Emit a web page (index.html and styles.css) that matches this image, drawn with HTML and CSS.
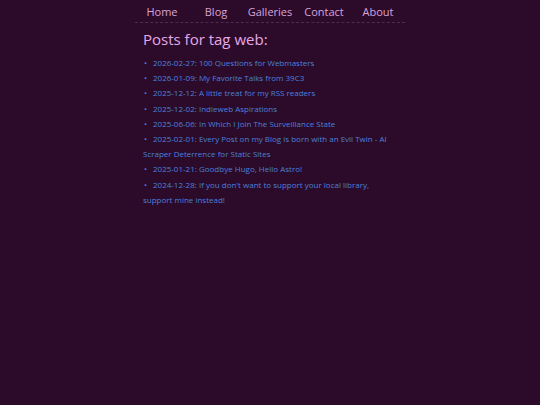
FILE: index.html
```html
<!DOCTYPE html>
<html lang="en">
<head>
<meta charset="utf-8">
<title>Posts for tag web</title>
<link rel="stylesheet" href="styles.css">
</head>
<body>
<div class="page">
  <nav class="nav">
    <a href="#">Home</a>
    <a href="#">Blog</a>
    <a href="#">Galleries</a>
    <a href="#">Contact</a>
    <a href="#">About</a>
  </nav>
  <main class="content">
    <h1 class="title">Posts for tag web:</h1>
    <ul class="posts">
      <li><a href="#">2026-02-27: 100 Questions for Webmasters</a></li>
      <li><a href="#">2026-01-09: My Favorite Talks from 39C3</a></li>
      <li><a href="#">2025-12-12: A little treat for my RSS readers</a></li>
      <li><a href="#">2025-12-02: Indieweb Aspirations</a></li>
      <li><a href="#">2025-06-06: In Which I Join The Surveillance State</a></li>
      <li><a href="#">2025-02-01: Every Post on my Blog is born with an Evil Twin - AI Scraper Deterrence for Static Sites</a></li>
      <li><a href="#">2025-01-21: Goodbye Hugo, Hello Astro!</a></li>
      <li><a href="#">2024-12-28: If you don't want to support your local library, support mine instead!</a></li>
    </ul>
  </main>
</div>
</body>
</html>
```
FILE: styles.css
```css
html, body {
  margin: 0;
  padding: 0;
  background: #2c0b2a;
  height: 100%;
}
body {
  font-family: "Open Sans", "DejaVu Sans", sans-serif;
}
.page {
  width: 270px;
  margin: 0 auto;
}
.nav {
  display: grid;
  grid-template-columns: repeat(5, 1fr);
  border-bottom: 1px dashed #4e2c4b;
  padding: 4px 0 3px;
}
.nav a {
  text-align: center;
  color: #d9a3d9;
  text-decoration: none;
  font-size: 11px;
  line-height: 15px;
}
.content {
  padding: 5px 8px;
}
.title {
  margin: 0 0 5px;
  font-size: 15px;
  font-weight: 400;
  color: #e6a8e6;
  line-height: 22px;
}
.posts {
  margin: 0;
  padding: 0;
  list-style: none;
}
.posts li {
  font-size: 8px;
  line-height: 15.2px;
  color: #4a80dc;
}
.posts li::before {
  content: "\2022";
  display: inline-block;
  width: 9px;
  padding-left: 1px;
}
.posts a {
  color: #4a80dc;
  text-decoration: none;
  font-weight: 500;
}
```
